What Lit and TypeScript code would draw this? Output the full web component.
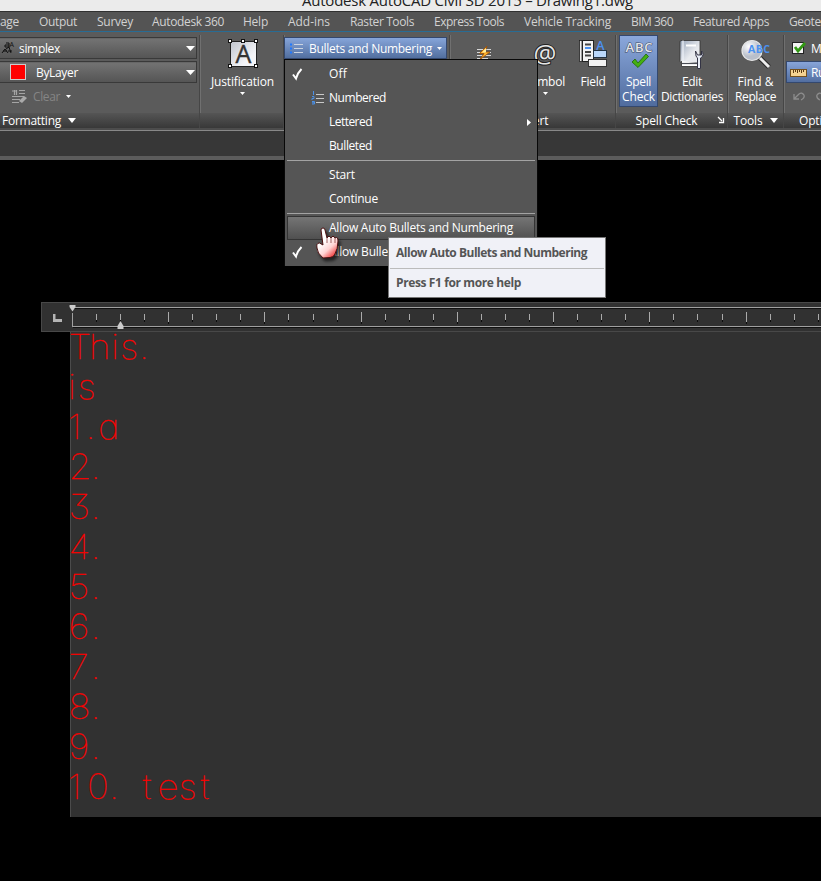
import { LitElement, html, svg, css } from "lit";
import { customElement, property } from "lit/decorators.js";

/** One-line label whose tracking is adjusted so that it spans a given width. */
@customElement("fit-label")
class FitLabel extends LitElement {
  @property({ type: Number }) w = 0;
  @property() text = "";
  static styles = css`
    :host { display: inline-block; white-space: pre; flex: none; }
  `;
  render() { return html`<span>${this.text}</span>`; }
  updated() {
    const s = this.renderRoot.querySelector("span") as HTMLElement;
    s.style.letterSpacing = "0px";
    const n = s.getBoundingClientRect().width;
    if (this.w && n) {
      s.style.letterSpacing = (this.w - n) / this.text.length + "px";
      this.style.width = this.w + "px";
    }
  }
}

const L = (text: string, w: number) => html`<fit-label .text=${text} .w=${w}></fit-label>`;
const down = (w = 9, h = 5) =>
  html`<svg class="ic" width=${w} height=${h} viewBox="0 0 10 6" preserveAspectRatio="none"><path d="M0 0H10L5 6Z" fill="#fff"/></svg>`;
const check = html`<svg class="ic" width="11" height="12" viewBox="0 0 11 12"><path d="M1 6.500L4 10.500C5 7 7 3.500 9.500 1" fill="none" stroke="#fff" stroke-width="2"/></svg>`;

const justifyIcon = html`<svg class="ic" width="30" height="30" viewBox="0 0 30 30">
  <defs><linearGradient id="jg" x1="0" y1="0" x2="1" y2="1"><stop offset="0" stop-color="#bfc3cc"/><stop offset=".7" stop-color="#f4f5f8"/></linearGradient></defs>
  <rect x="2.500" y="2.500" width="26" height="25" fill="url(#jg)" stroke="#222"/>
  <text x="15.500" y="24" text-anchor="middle" font-family="Open Sans, sans-serif" font-size="25" fill="#333" stroke="#333" stroke-width=".4">A</text>
  ${[[1, 1], [14, 1], [27, 1], [1, 26], [27, 26]].map(([x, y]) => svg`<rect x=${x + 0.5} y=${y + 0.5} width="3" height="3" transform="translate(-1 -1)" fill="#fff" stroke="#111"/>`)}
</svg>`;

const fieldIcon = html`<svg class="ic" width="30" height="30" viewBox="0 0 30 30">
  <rect x="1.500" y="1.500" width="2.500" height="21" fill="#eee" stroke="#222" stroke-width=".8"/>
  <rect x="4.500" y="1.500" width="11" height="21" fill="#f3f3f3" stroke="#222"/>
  <path d="M7 5.500h6M7 13h6M7 16.500h6" stroke="#444" stroke-width="2"/><path d="M7 9h6" stroke="#4b91f0" stroke-width="2"/>
  <text x="22.500" y="11" text-anchor="middle" font-family="Open Sans, sans-serif" font-size="12.500" font-weight="600" fill="#4b91f0">A</text>
  <rect x="15.500" y="11.500" width="13" height="7" fill="#b9d7fb" stroke="#234"/>
  <rect x="10.500" y="20.500" width="18" height="7" fill="#f1f1f1" stroke="#333"/>
</svg>`;

const symbolIcon = html`<svg class="ic" width="30" height="30" viewBox="0 0 30 30">
  <text x="15" y="23.500" text-anchor="middle" font-family="Open Sans, sans-serif" font-size="25.500" fill="#e6e6e6" stroke="#222" stroke-width="2" paint-order="stroke">@</text></svg>`;

const spellIcon = html`<svg class="ic" width="30" height="30" viewBox="0 0 30 30">
  <text x="1.500" y="13" textLength="27" font-family="Open Sans, sans-serif" font-size="13" font-weight="600" fill="#e4e4e8" stroke="#3c4860" stroke-width="1" paint-order="stroke">ABC</text>
  <path d="M8 23L11 20L14 24L22 15L24.500 17.500L14 28.500Z" fill="#44b012" stroke="#1e6508" stroke-width=".8"/></svg>`;

const dictIcon = html`<svg class="ic" width="30" height="30" viewBox="0 0 30 30">
  <defs><linearGradient id="dg" x1="0" y1="0" x2="1" y2="1"><stop offset="0" stop-color="#9aa7bb"/><stop offset=".6" stop-color="#e8eaee"/></linearGradient></defs>
  <path d="M4 1.500H23V24H5Q3 24 3 22V3Q3 1.500 4 1.500Z" fill="url(#dg)" stroke="#303030" stroke-width=".8"/>
  <path d="M6 1.500V22" stroke="#eef2f8" stroke-width="1.200"/><path d="M9 6.500h10" stroke="#fff" stroke-width="2"/>
  <path d="M4.500 22V27.500H22V24.500" fill="#fff" stroke="#303030" stroke-width=".8"/><path d="M5 24.500h17" stroke="#4a4d55" stroke-width="1.200"/>
  <path d="M18.500 12L19 17Q20 18.500 20.500 19V29.500H23.500V19Q26 18 26 15.500Q26 13 24.500 12V16H20.500Z" fill="#e8edf6" stroke="#334" stroke-width="1"/></svg>`;

const findIcon = html`<svg class="ic" width="30" height="30" viewBox="0 0 30 30">
  <defs><radialGradient id="fg" cx=".35" cy=".3"><stop offset="0" stop-color="#fff"/><stop offset="1" stop-color="#b9bfca"/></radialGradient></defs>
  <path d="M19 19L28 28" stroke="#292929" stroke-width="5"/><path d="M19 19L28 28" stroke="#eee" stroke-width="3"/>
  <circle cx="11" cy="11.500" r="10" fill="url(#fg)" stroke="#e8e8e8" stroke-width="1.200"/>
  <text x="7" y="14" textLength="22" font-family="Open Sans, sans-serif" font-size="10.500" font-weight="700" fill="#4b91f0">ABC</text></svg>`;

const bulletIcon = html`<svg class="ic" width="14" height="13" viewBox="0 0 14 13"><path d="M0 2.500h2M0 6.500h2M0 10.500h2" stroke="#1f78ff" stroke-width="2"/><path d="M4 2.500h9M4 6.500h9M4 10.500h9" stroke="#ccd4e0"/></svg>`;
const numberIcon = html`<svg class="ic" width="14" height="14" viewBox="0 0 14 14"><g fill="none" stroke="#4b91e8"><path d="M1.500 0V4M0 5.500H2V7.500H0V9M0 10.500H2.500V13H0M0 11.800H2"/></g><path d="M4 3.500h8M4 7.500h8M4 11.500h8" stroke="#c9c9c9"/></svg>`;

interface Item { text: string; w: number; checked?: boolean; icon?: unknown; sub?: boolean; hot?: boolean; rule?: boolean }
const MENU: Item[] = [
  { text: "Off", w: 18, checked: true },
  { text: "Numbered", w: 57, icon: numberIcon },
  { text: "Lettered", w: 43, sub: true },
  { text: "Bulleted", w: 43, rule: true },
  { text: "Start", w: 26 },
  { text: "Continue", w: 49, rule: true },
  { text: "Allow Auto Bullets and Numbering", w: 184, hot: true },
  { text: "Allow Bulle", w: 59, checked: true },
];

const TABS: [string, number, number][] = [
  ["age", 19, 20], ["Output", 38, 20], ["Survey", 36, 19], ["Autodesk 360", 72, 19], ["Help", 25, 20],
  ["Add-ins", 42, 20], ["Raster Tools", 64, 20], ["Express Tools", 70, 20], ["Vehicle Tracking", 87, 20],
  ["BIM 360", 42, 20], ["Featured Apps", 76, 20], ["Geotechnical", 68, 0],
];

/** Editor glyphs are drawn slightly wide. */
const STRETCH = 1.07;
/** Editor lines: text, glyph x positions, baseline (relative to the text area). */
const NUM = [-2.5, 19.5];
const LINES: [string, number[], number][] = [
  ["This.", [-2.5, 18, 40, 49, 68], 26.5],
  ["is", [-3, 6.5], 67],
  ["1.a", [-3, 14.5, 27], 107],
  ["2.", NUM, 147], ["3.", NUM, 187], ["4.", NUM, 227], ["5.", NUM, 267], ["6.", NUM, 307],
  ["7.", NUM, 347], ["8.", NUM, 387.5], ["9.", NUM, 427.5],
  ["10. test", [-3, 16, 38, 47, 71.5, 86.5, 107.5, 129.5], 467.5],
];

@customElement("app-root")
class AppRoot extends LitElement {
  static styles = css`
    * { box-sizing: border-box; }
    :host { display: flex; flex-direction: column; position: relative; width: 821px; height: 881px; overflow: hidden; background: #000; color: #fff; font: 12px/15px "Open Sans", "Noto Sans", sans-serif; }
    .ic { display: block; flex: none; overflow: visible; }
    .title { height: 12px; flex: none; background: #ebebeb; border-bottom: 1px solid #303030; overflow: hidden; color: #222; display: flex; padding-left: 302px; font-size: 15px; line-height: 20px; }
    .title fit-label { margin-top: -10px; }
    .tabs { height: 19px; flex: none; display: flex; align-items: center; background: #545454; color: #d2d2d2; overflow: hidden; }
    .tab { display: flex; flex: none; }
    .ribbon { height: 97px; flex: none; border-top: 1px solid #286c94; background: #5b5b5b; display: flex; overflow: hidden; padding-top: 3px; }
    .panel { flex: none; display: flex; flex-direction: column; border-right: 1px solid #464646; box-shadow: 1px 0 #707070; }
    .body { height: 78px; display: flex; align-items: flex-start; flex: none; }
    .ptitle { height: 16px; flex: none; display: flex; align-items: center; justify-content: center; gap: 7px; background: linear-gradient(#555, #383838); border-bottom: 1px solid #286c94; padding-bottom: 1px; }
    .ptitle.left { justify-content: flex-start; padding-left: 2px; }
    .p-format { width: 200px; } .p-just { width: 84px; } .p-para { width: 166px; } .p-insert { width: 166px; }
    .p-spell { width: 112px; } .p-tools { width: 56px; } .p-opt { width: 60px; }
    .p-just .body { padding-left: 1px; }
    .p-tools .body { padding-left: 1px; }
    .stack { display: flex; flex-direction: column; gap: 2px; padding-top: 2px; }
    .combo { width: 197px; height: 22px; display: flex; align-items: center; background: linear-gradient(#626262, #727272 8%, #555); border: 1px solid #393939; border-left: 0; padding: 0 1px 0 2px; }
    .combo .grow { flex: 1; }
    .swatch { width: 16px; height: 16px; background: #f00; border: 1px solid #ccc; margin: 0 10px 0 8px; }
    .row { display: flex; align-items: center; }
    .clear { color: #858585; height: 22px; padding-left: 12px; gap: 6px; }
    .big { display: flex; flex-direction: column; align-items: center; padding-top: 4px; height: 72px; flex: none; }
    .big .lab { display: flex; flex-direction: column; align-items: center; margin-top: 5px; flex: none; }
    .arrow { margin-top: 3px; }
    .on { background: linear-gradient(#8ba8dc, #4f6b9d); box-shadow: inset 0 0 0 1px #34486e; }
    .w-just { width: 83px; } .w-sym { width: 52px; } .w-field { width: 44px; } .w-spell { width: 39px; } .w-dict { width: 68px; } .w-find { width: 53px; }
    .drop { width: 163px; height: 22px; margin-top: 2px; display: flex; align-items: center; gap: 5px; padding-left: 5px; background: linear-gradient(#86a5da, #526f9f); border: 1px solid #34486e; }
    .drop .txt { flex: none; display: flex; }
    .flash { width: 74px; display: flex; justify-content: center; padding: 10px 3px 0 0; }
    .opts { display: flex; flex-direction: column; width: 60px; padding: 2px 0 0 2px; }
    .opt { height: 22px; display: flex; align-items: center; gap: 4px; padding-left: 4px; margin-bottom: 2px; flex: none; }
    .opt.dim { padding-left: 7px; gap: 11px; }
    .under { height: 3px; flex: none; background: #4c4c4c; border-bottom: 1px solid #888; }
    .band { height: 29px; flex: none; background: #373737; border-bottom: 4px solid #5c5c5c; }
    .work { flex: none; padding: 142px 0 0 41px; display: flex; flex-direction: column; }
    .ruler { height: 30px; background: #313131; border: 1px solid #484848; border-right: 0; display: flex; }
    .area { margin-left: 29px; height: 485px; background: #313131; border-left: 1px solid #4b4b4b; }
    .mtext { font-family: Inter, Lato, sans-serif; font-weight: 100; font-size: 34.500px; fill: #f00; stroke: #f00; stroke-width: .25; font-feature-settings: "cv11", "cv09"; }
    .menu { position: absolute; left: 284px; top: 59px; width: 254px; height: 207px; background: #555; border: 1px solid #080808; border-bottom: 0; padding: 2px; display: flex; flex-direction: column; font-weight: 500; }
    .item { height: 24px; flex: none; display: flex; align-items: center; border: 1px solid transparent; }
    .item.hot { background: linear-gradient(#757575, #505050); border-color: #343434; }
    .mark { width: 20px; padding-left: 4px; } .mi { width: 21px; padding-left: 4px; }
    .item .txt { flex: 1; display: flex; padding-bottom: 1px; }
    .sub { margin-right: 3px; }
    .rule { height: 5px; flex: none; display: flex; align-items: center; }
    .rule::before { content: ""; height: 1px; width: 100%; background: #a3a3a3; }
    .tip { position: absolute; left: 388px; top: 237px; width: 218px; height: 61px; background: #f0f1f7; border: 1px solid #777; color: #555; font-weight: 700; display: flex; flex-direction: column; padding: 0 1px; }
    .tip .l { height: 30px; display: flex; align-items: center; padding: 0 0 1px 6px; }
    .tip .l + .l { border-top: 1px solid #bbb; height: 29px; }
    .hand { position: absolute; left: 315px; top: 226px; filter: drop-shadow(2px 3px 1.500px rgba(0,0,0,.6)); }
  `;

  private ruler() {
    const ticks = Array.from({ length: 32 }, (_, i) => i + 1);
    return html`<svg class="ic" width="780" height="28" viewBox="42 303 780 28">
      <g shape-rendering="crispEdges">
        <path d="M73 308.500H822M73 327.500H822" stroke="#111"/>
        <path d="M73 307.500H822M72 326.500H822M72.500 313V326" stroke="#a0a0a0"/>
        ${ticks.map((i) => {
          const x = Math.floor(72.4 + 24.06 * i), m = i % 4 === 0;
          return svg`<rect x=${x} y=${m ? 312 : 314} width="1" height=${m ? 10 : 6} fill="#aaa"/><rect x=${x} y=${m ? 322 : 320} width="1" height="2" fill="#0c0c0c"/>`;
        })}
      </g>
      <path d="M69.500 305H75.500V307L72.500 311.500L69.500 307Z" fill="#ccc"/>
      <path d="M120.500 321L123.500 326V329H117.500V326Z" fill="#ccc"/>
      <path d="M53 314H55.500V319H62V322H53Z" fill="#b4b4b4"/>
    </svg>`;
  }

  render() {
    return html`
      <div class="title">${L("Autodesk AutoCAD Civil 3D 2015 – Drawing1.dwg", 331)}</div>
      <div class="tabs">${TABS.map(([t, w, g]) => html`<div class="tab" style="margin-right:${g}px">${L(t, w)}</div>`)}</div>
      <div class="ribbon">
        <div class="panel p-format">
          <div class="body"><div class="stack">
            <div class="combo"><svg class="ic" width="14" height="14" viewBox="0 0 14 14"><g fill="none" stroke="#111"><path d="M0 12L3 8L6 12M1 10H5M4 8L7 6L9 12M6 10H10M4 2H7V6H3V4H7"/></g><text x="7.500" y="6" font-family="Open Sans, sans-serif" font-size="7" fill="#111">A</text></svg>
              <div class="grow row" style="padding-left:3px">${L("simplex", 41)}</div>${down(9, 5)}</div>
            <div class="combo"><div class="swatch"></div><div class="grow row">${L("ByLayer", 42)}</div>${down(9, 5)}</div>
            <div class="row clear"><svg class="ic" width="15" height="15" viewBox="0 0 15 15"><path d="M0 2H5M2.500 1V6M4.500 1V6M7 1.500H13M7 4.500H13M0 7.500H12M0 10.500H8M0 13.500H7" stroke="#a5a5a5" fill="none" stroke-width="1.200"/><path d="M7 12L12 7L15 9L10 14Z" fill="#aaa"/></svg>
              ${L("Clear", 27)}${down(5, 3)}</div>
          </div></div>
          <div class="ptitle left">${L("Formatting", 59)}${down(8, 5)}</div>
        </div>
        <div class="panel p-just"><div class="body"><div class="big w-just">${justifyIcon}<div class="lab">${L("Justification", 63)}<span class="arrow">${down(5, 3)}</span></div></div></div><div class="ptitle"></div></div>
        <div class="panel p-para"><div class="body"><div class="drop">${bulletIcon}<div class="txt">${L("Bullets and Numbering", 123)}</div>${down(5, 3)}</div></div><div class="ptitle"></div></div>
        <div class="panel p-insert"><div class="body">
          <div class="flash"><svg class="ic" width="17" height="16" viewBox="0 0 17 16"><path d="M2 4.500H16M2 7.500H16M2 10.500H16M2 13.500H13" stroke="#d7d7d7"/><path d="M12 1L4.500 8.500H9L5 14.500L15 7H10Z" fill="#ffb52e" stroke="#a04c00" stroke-width=".8"/><path d="M11 3L7 7.500H11" fill="#fff0a0"/></svg></div>
          <div class="big w-sym">${symbolIcon}<div class="lab">${L("Symbol", 40)}<span class="arrow">${down(5, 3)}</span></div></div>
          <div class="big w-field">${fieldIcon}<div class="lab">${L("Field", 25)}</div></div>
        </div><div class="ptitle">${L("Insert", 32)}</div></div>
        <div class="panel p-spell"><div class="body" style="padding-left:3px">
          <div class="big w-spell on">${spellIcon}<div class="lab">${L("Spell", 25)}${L("Check", 33)}</div></div>
          <div class="big w-dict">${dictIcon}<div class="lab">${L("Edit", 20)}${L("Dictionaries", 62)}</div></div>
        </div><div class="ptitle" style="padding-left:16px;gap:20px">${L("Spell Check", 62)}<svg class="ic" width="6" height="6" viewBox="0 0 6 6"><path d="M0 0L4 4M5.500 1V5.500H1" stroke="#fff" fill="none" stroke-width="1.300"/></svg></div></div>
        <div class="panel p-tools"><div class="body"><div class="big w-find">${findIcon}<div class="lab">${L("Find &", 36)}${L("Replace", 41)}</div></div></div><div class="ptitle">${L("Tools", 29)}${down(8, 5)}</div></div>
        <div class="panel p-opt"><div class="body"><div class="opts">
          <div class="opt" style="padding-left:6px"><svg class="ic" width="15" height="14" viewBox="0 0 15 14"><rect x=".5" y="1.500" width="11" height="11" fill="#f3f3f3" stroke="#222"/><path d="M3 6L6 10L13 2" stroke="#329914" stroke-width="2.800" fill="none"/></svg>${L("More", 30)}</div>
          <div class="opt on"><svg class="ic" width="17" height="9" viewBox="0 0 17 9"><rect x=".5" y="1.500" width="16" height="7" fill="#f4d291" stroke="#74501c"/><path d="M3.500 2v3M5.500 2v2M7.500 2v3M9.500 2v2M11.500 2v3M13.500 2v2" stroke="#5b3a10"/></svg>${L("Ruler", 27)}</div>
          <div class="opt dim">${[0, 1].map((m) => html`<svg class="ic" width="12" height="9" viewBox="0 0 12 9"><path transform=${m ? "translate(12 0) scale(-1 1)" : ""} d="M1 2V7H6M1 7L6 2Q9 0 11 3Q12 6 8 8" fill="none" stroke="#8d8d8d" stroke-width="1.300"/></svg>`)}</div>
        </div></div><div class="ptitle left" style="padding-left:15px">${L("Options", 43)}</div></div>
      </div>
      <div class="under"></div>
      <div class="band"></div>
      <div class="work">
        <div class="ruler">${this.ruler()}</div>
        <div class="area"><svg class="ic" width="750" height="485" viewBox="0 0 750 485"><g transform="scale(${STRETCH} 1)">${LINES.map(([t, xs, y]) => svg`<text class="mtext" xml:space="preserve" x=${xs.map((x) => (x / STRETCH).toFixed(2)).join(" ")} y=${y}>${t}</text>`)}</g></svg></div>
      </div>
      <div class="menu">${MENU.map((m) => html`
        <div class="item ${m.hot ? "hot" : ""}"><div class="mark">${m.checked ? check : ""}</div><div class="mi">${m.icon ?? ""}</div><div class="txt">${L(m.text, m.w)}</div>
        ${m.sub ? html`<svg class="ic sub" width="4" height="7" viewBox="0 0 4 7"><path d="M0 0L4 3.500L0 7Z" fill="#fff"/></svg>` : ""}</div>
        ${m.rule ? html`<div class="rule"></div>` : ""}`)}</div>
      <svg class="ic hand" width="26" height="34" viewBox="0 0 26 34">
        <defs><linearGradient id="hg" x1=".3" y1=".2" x2=".8" y2="1"><stop offset=".25" stop-color="#fff"/><stop offset=".6" stop-color="#ffd4d4"/><stop offset="1" stop-color="#ee2525"/></linearGradient></defs>
        <path d="M6 4Q6 2 8 2Q10 2 10 4L12 12Q14 8.500 16 12Q18 8.500 20 12Q23 10 23 15Q23 23 19.500 29Q18 31 15 31.500L8 32Q2 27 2 22Q1 17 4.500 17L8 19Z" fill="url(#hg)" stroke="#4b1010" stroke-width="1"/>
        <path d="M12 12V17M16 12V17M20 12V17" stroke="#8a4040" stroke-width=".8"/>
      </svg>
      <div class="tip"><div class="l">${L("Allow Auto Bullets and Numbering", 191)}</div><div class="l">${L("Press F1 for more help", 125)}</div></div>
    `;
  }
}
